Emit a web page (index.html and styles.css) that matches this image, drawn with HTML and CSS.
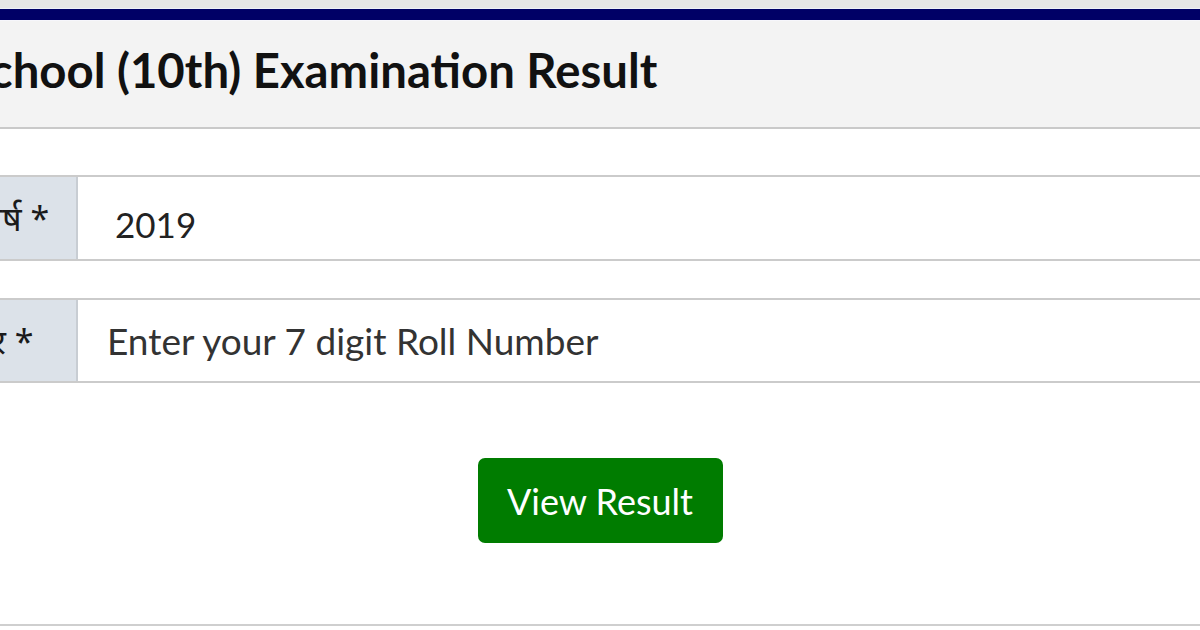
FILE: index.html
```html
<!DOCTYPE html>
<html lang="hi">

<head>
    <meta charset="UTF-8">
    <meta name="viewport" content="width=device-width, initial-scale=1.0">
    <title>Secondary School (10th) Examination Result</title>
    <link rel="stylesheet" href="styles.css">
</head>

<body>
    <div class="top-strip"></div>

    <div class="card">
        <div class="card-header">
            <h2>School (10th) Examination Result</h2>
        </div>

        <form class="card-body" onsubmit="return false">
            <div class="field-row">
                <label class="field-label" for="year"><span>परीक्षा वर्ष *</span></label>
                <div class="field-value field-select" id="year">2019</div>
            </div>

            <div class="field-row">
                <label class="field-label" for="roll"><span>रोल नंबर *</span></label>
                <input class="field-value field-input" id="roll" type="text" placeholder="Enter your 7 digit Roll Number">
            </div>

            <div class="actions">
                <button class="btn-result" type="submit">View Result</button>
            </div>
        </form>
    </div>
</body>

</html>
```

FILE: styles.css
```css
body {
    margin: 0;
    background: #fff;
    font-family: Lato, "Noto Sans", sans-serif;
    color: #111;
    overflow: hidden;
}

.top-strip {
    height: 8px;
    background: #e6e6e6;
    border-bottom: 1px solid #eef0f8;
}

.card {
    border-top: 11px solid #000066;
}

.card-header {
    height: 109px;
    background: #f3f3f3;
    border-top: 1px solid #f6f6fb;
    border-bottom: 2px solid #c9c9c9;
    display: flex;
    align-items: center;
    box-sizing: border-box;
}

/* the left end of the heading is cut off by the window */
.card-header h2 {
    margin: 0 0 10px -36px;
    font-size: 47.3px;
    font-weight: bold;
    white-space: nowrap;
    color: #111;
}

.card-body {
    padding-top: 46px;
    border-bottom: 2px solid #cfcfcf;
    padding-bottom: 81px;
}

.field-row {
    display: flex;
    height: 86px;
    box-sizing: border-box;
    border-top: 2px solid #cbcbcb;
    border-bottom: 2px solid #cbcbcb;
    margin-bottom: 37px;
}

.field-row + .field-row {
    height: 85px;
    margin-bottom: 75px;
}

.field-label {
    width: 78px;
    flex: none;
    box-sizing: border-box;
    background: #dce2e9;
    border-right: 2px solid #c8cdd3;
    overflow: hidden;
    white-space: nowrap;
    display: flex;
    align-items: center;
    font-family: "Noto Sans", sans-serif;
    font-size: 34px;
    color: #1a1a1a;
}

.field-label span {
    margin-left: -101px;
}

.field-value {
    flex: 1;
    min-width: 0;
    border: 0;
    outline: none;
    background: #fff;
    font-family: Lato, "Noto Sans", sans-serif;
    font-size: 37px;
    color: #222;
    box-sizing: border-box;
}

.field-select {
    display: flex;
    align-items: center;
    padding-left: 37px;
    padding-top: 12px;
    font-size: 35px;
}

.field-input {
    padding-left: 29px;
}

.field-input::placeholder {
    color: #333;
    opacity: 1;
}

.actions {
    text-align: center;
}

.btn-result {
    width: 245px;
    height: 85px;
    border: 0;
    border-radius: 7px;
    background: #007c00;
    color: #fff;
    font-family: Lato, "Noto Sans", sans-serif;
    font-size: 36px;
    cursor: pointer;
}
```
